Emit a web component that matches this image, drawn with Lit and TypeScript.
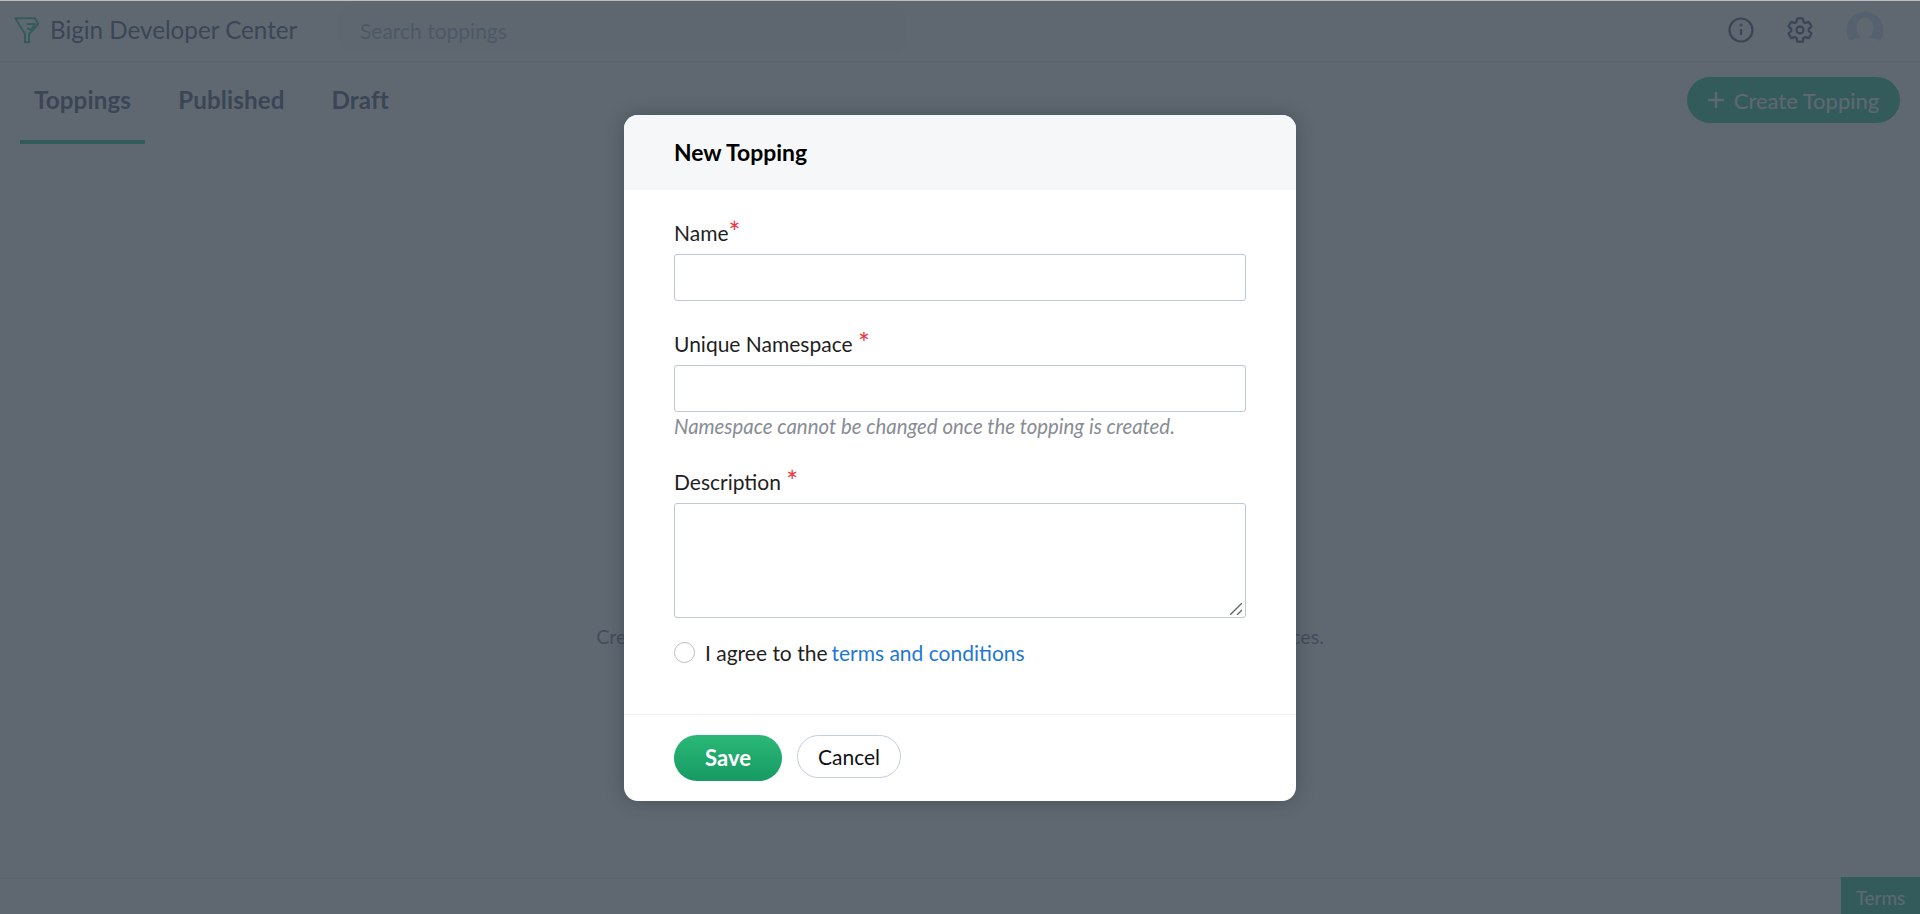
import { LitElement, html, css } from "lit";
import { customElement } from "lit/decorators.js";

// The page is drawn in its real colours and dimmed by a scrim rgba(42,54,66,.75).
@customElement("app-root")
export class AppRoot extends LitElement {
  static styles = css`
    :host {
      display: block;
      position: relative;
      height: 914px;
      overflow: hidden;
      font-family: Lato, "Open Sans", sans-serif;
      background: #fff;
    }
    * { box-sizing: border-box; }
    .page { display: flex; flex-direction: column; height: 914px; color: #6e7692; }
    .top {
      display: flex; align-items: center; height: 62px; padding: 0 35px 2px 14px;
      border-top: 1px solid #bdbdbd; border-bottom: 1px solid #f3f4f5;
    }
    .logo { width: 26px; height: 30px; flex: none; }
    .brand { font-size: 24.2px; margin: -2px 0 0 10px; width: 288px; white-space: nowrap; }
    .search {
      width: 568px; height: 46px; border-radius: 12px; background: #f9fafb;
      padding: 0 22px; display: flex; align-items: center;
      font-size: 21px; color: #b6bed2;
    }
    .right { margin-left: auto; display: flex; align-items: center; gap: 31px; }
    .ico { width: 28px; height: 28px; display: block; }
    .avatar { width: 40px; height: 40px; display: block; }
    .tabsbar { display: flex; align-items: flex-start; height: 82px; padding: 0 20px; }
    .tabs { display: flex; gap: 19px; height: 82px; }
    .tab { font-size: 24.2px; letter-spacing: .12px; font-weight: 700; padding: 20px 14px 0; line-height: 36px; }
    .tab.on { border-bottom: 4px solid #52caa6; }
    .create {
      margin-left: auto; margin-top: 15px; height: 46px; width: 213px; border-radius: 23px;
      background: #52caa6; color: #fff; font-size: 22px; display: flex; align-items: center;
      justify-content: center; gap: 10px;
    }
    .plus { width: 16px; height: 16px; display: block; flex: none; }
    .empty {
      flex: 1; display: flex; justify-content: center; align-items: flex-start;
      padding-top: 481px; font-size: 19.600px; white-space: nowrap; color: #8c95a8;
    }
    .foot { height: 37px; border-top: 2px solid #f3f4f5; display: flex; justify-content: flex-end; }
    .terms {
      width: 79px; background: #52caa6; color: #fff; font-size: 19px; padding-top: 4px;
      display: flex; align-items: center; justify-content: center; margin-top: -2px; height: 37px;
    }
    .scrim {
      position: absolute; inset: 1px 0 0 0; background: rgba(42, 54, 66, .75);
      display: flex; justify-content: center; align-items: flex-start; padding-top: 114px;
    }
    .modal {
      width: 672px; height: 686px; background: #fff; border-radius: 14px; overflow: hidden;
      display: flex; flex-direction: column; box-shadow: 0 0 18px rgba(30,40,50,.35); color: #1f1f1f;
    }
    .mhead {
      height: 75px; background: #f6f7f9; padding: 0 50px 2px; display: flex; align-items: center;
      font-size: 22.900px; font-weight: 700; color: #000;
    }
    .mbody { flex: 1; padding: 25px 50px 0; display: flex; flex-direction: column; }
    label { display: block; font-size: 21px; line-height: 36px; height: 39px; white-space: nowrap; }
    .req { color: #f0323c; font-size: 28px; line-height: 0; vertical-align: -2px; }
    input, textarea {
      display: block; width: 572px; border: 1.5px solid #bcc8d6; border-radius: 3px; background: #fff;
      outline: none; margin: 0; font: inherit;
    }
    input { height: 47px; }
    textarea { height: 115px; resize: none; }
    .areawrap { position: relative; width: 572px; }
    .grip { position: absolute; right: 4px; bottom: 3px; width: 12px; height: 12px; display: block; }
    .field { margin-bottom: 25px; }
    .field.last { margin-bottom: 19px; }
    .hint { font-size: 20.400px; font-style: italic; color: #888c94; line-height: 26px; padding-top: 1px; white-space: nowrap; }
    .agree { display: flex; align-items: center; font-size: 21px; margin-top: 3px; }
    .radio { width: 21px; height: 21px; border: 1.5px solid #bdbdbd; border-radius: 50%; margin-right: 10px; flex: none; }
    .agree a { color: #1f78d1; margin-left: 4px; text-decoration: none; }
    .mfoot {
      height: 87px; border-top: 1px solid #eef0f2; padding: 20px 50px 0; display: flex;
      align-items: flex-start; gap: 15px;
    }
    .btn { border-radius: 23px; font: inherit; font-size: 21px; display: flex; align-items: center; justify-content: center; padding: 0 0 1px; }
    .save {
      width: 108px; height: 46px; border: 0; color: #fff; font-weight: 700; font-size: 22px;
      background: linear-gradient(#2ab877, #179a63);
    }
    .cancel { width: 104px; height: 43px; background: #fff; border: 1.5px solid #c3cddb; color: #111; }
  `;

  render() {
    return html`
      <div class="page">
        <header class="top">
          <svg class="logo" viewBox="0 0 26 30" fill="none" stroke="#52caa6" stroke-width="2" stroke-linejoin="round">
            <path d="M1.300 3.300L11 19v8.300h4V19l9.300-10-3.300-5.700z" />
            <path d="M12.700 9H21l-4 6-4-2" />
          </svg>
          <div class="brand">Bigin Developer Center</div>
          <div class="search">Search toppings</div>
          <div class="right">
            <svg class="ico" viewBox="0 0 28 28" fill="none" stroke="#6e7692" stroke-width="2.200">
              <circle cx="14" cy="14" r="11.500" />
              <path d="M14 13v6" />
              <circle cx="14" cy="9" r=".5" />
            </svg>
            <svg class="ico" viewBox="0 0 24 24" fill="none" stroke="#6e7692" stroke-width="2" stroke-linejoin="round">
              <path d="M19.430 12.980c.04-.32.07-.64.07-.98 0-.34-.03-.66-.07-.98l2.110-1.650c.19-.15.24-.42.12-.64l-2-3.460c-.09-.16-.26-.25-.44-.25-.06 0-.12.01-.17.03l-2.490 1c-.52-.4-1.080-.73-1.690-.98l-.38-2.650C14.460 2.180 14.250 2 14 2h-4c-.25 0-.46.18-.49.42l-.38 2.650c-.61.25-1.170.59-1.690.98l-2.490-1c-.06-.02-.12-.03-.18-.03-.17 0-.34.09-.43.25l-2 3.460c-.13.22-.07.49.12.64l2.110 1.650c-.04.32-.07.65-.07.98 0 .33.03.66.07.98l-2.110 1.650c-.19.15-.24.42-.12.64l2 3.460c.09.16.26.25.44.25.06 0 .12-.01.17-.03l2.490-1c.52.4 1.080.73 1.690.98l.38 2.650c.03.24.24.42.49.42h4c.25 0 .46-.18.49-.42l.38-2.650c.61-.25 1.170-.59 1.690-.98l2.490 1c.06.02.12.03.18.03.17 0 .34-.09.43-.25l2-3.460c.12-.22.07-.49-.12-.64l-2.110-1.650z" />
              <circle cx="12" cy="12" r="3" />
            </svg>
            <svg class="avatar" viewBox="0 0 40 40">
              <circle cx="20" cy="20" r="18.500" fill="#d6e4f5" />
              <ellipse cx="20" cy="18" rx="8.500" ry="10.500" fill="#fdfdfd" />
              <path d="M5 31c4-3 9-3.500 15-3.500s11 .5 15 3.500a18.500 18.500 0 0 1-30 0z" fill="#fdfdfd" />
            </svg>
          </div>
        </header>
        <div class="tabsbar">
          <div class="tabs">
            <div class="tab on">Toppings</div>
            <div class="tab">Published</div>
            <div class="tab">Draft</div>
          </div>
          <div class="create">
            <svg class="plus" viewBox="0 0 16 16" stroke="#fff" stroke-width="2.400"><path d="M8 0v16M0 8h16" /></svg>
            Create Topping
          </div>
        </div>
        <div class="empty">Create toppings to extend the capabilities of Bigin and connect it with other services.</div>
        <footer class="foot"><div class="terms">Terms</div></footer>
      </div>
      <div class="scrim">
        <section class="modal">
          <div class="mhead">New Topping</div>
          <div class="mbody">
            <div class="field">
              <label>Name<span class="req">*</span></label>
              <input type="text" />
            </div>
            <div class="field">
              <label>Unique Namespace <span class="req">*</span></label>
              <input type="text" />
              <div class="hint">Namespace cannot be changed once the topping is created.</div>
            </div>
            <div class="field last">
              <label>Description <span class="req">*</span></label>
              <div class="areawrap">
                <textarea></textarea>
                <svg class="grip" viewBox="0 0 12 12" stroke="#666" stroke-width="1.400" fill="none">
                  <path d="M0 12L12 0M7 12l5-5" />
                </svg>
              </div>
            </div>
            <div class="agree">
              <span class="radio"></span>I agree to the <a href="#">terms and conditions</a>
            </div>
          </div>
          <div class="mfoot">
            <button class="btn save">Save</button>
            <button class="btn cancel">Cancel</button>
          </div>
        </section>
      </div>
    `;
  }
}
